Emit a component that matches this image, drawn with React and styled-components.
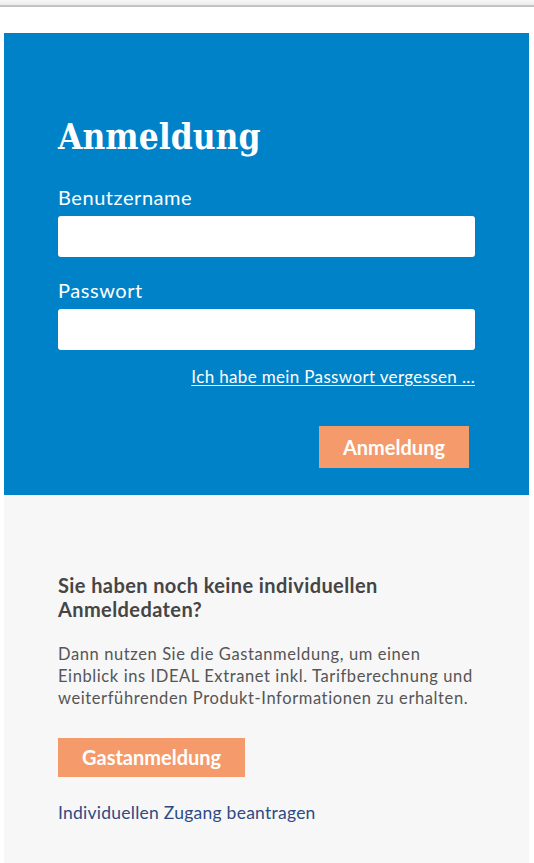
import React from "react";
import styled, { createGlobalStyle } from "styled-components";

const GlobalStyle = createGlobalStyle`
  html, body {
    margin: 0;
    padding: 0;
    background: #ffffff;
  }
  body {
    font-family: Lato, "Open Sans", sans-serif;
  }
  * {
    box-sizing: border-box;
  }
`;

const TopBar = styled.div`
  height: 7px;
  background: linear-gradient(#f7f7f7, #ececec);
  border-bottom: 2px solid #c3c3c3;
`;

const Page = styled.div`
  padding: 26px 5px 0 4px;
`;

const LoginPanel = styled.form`
  background: #0082c8;
  padding: 84px 54px 27px;
  display: flex;
  flex-direction: column;
`;

const Title = styled.h1`
  margin: 0 0 28px;
  font-family: "DejaVu Serif", "Liberation Serif", serif;
  font-stretch: condensed;
  font-weight: bold;
  font-size: 35px;
  line-height: 40px;
  color: #ffffff;
`;

const Field = styled.div`
  display: flex;
  flex-direction: column;
  gap: 7px;
  margin-bottom: ${(p) => p.$spacing}px;
`;

const Label = styled.label`
  font-size: 20px;
  letter-spacing: 0.55px;
  line-height: 24px;
  color: #ffffff;
`;

const Input = styled.input`
  height: 41px;
  border: none;
  border-radius: 3px;
  background: #ffffff;
  padding: 0 10px;
  font: inherit;
  outline: none;
`;

const ForgotLink = styled.a`
  align-self: flex-end;
  font-size: 17px;
  letter-spacing: 0.35px;
  line-height: 20px;
  color: #ffffff;
  text-decoration: underline;
  text-underline-offset: 2px;
  margin-bottom: 39px;
`;

const Button = styled.button`
  align-self: ${(p) => p.$align};
  margin-right: ${(p) => p.$offset || 0}px;
  height: ${(p) => p.$height}px;
  padding: 0 24px;
  border: none;
  border-radius: 0;
  background: #f59b6b;
  color: #ffffff;
  font-family: Lato, sans-serif;
  font-weight: bold;
  font-size: 20px;
  line-height: ${(p) => p.$height}px;
  cursor: pointer;
`;

const GuestPanel = styled.section`
  background: #f7f7f7;
  padding: 78px 54px 42px;
  display: flex;
  flex-direction: column;
  color: #4d4d4d;
`;

const GuestHeading = styled.h2`
  margin: 0 0 22px;
  font-size: 20px;
  letter-spacing: 0.4px;
  line-height: 24px;
  font-weight: bold;
  color: #454545;
`;

const GuestText = styled.p`
  margin: 0 -8px 29px 0;
  font-size: 16.5px;
  letter-spacing: 0.6px;
  line-height: 22px;
  color: #555555;
`;

const RequestLink = styled.a`
  margin-top: 25px;
  font-size: 17.5px;
  letter-spacing: 0.25px;
  line-height: 22px;
  color: #2d4a86;
  text-decoration: none;
`;

export default function App() {
  return (
    <>
      <GlobalStyle />
      <TopBar />
      <Page>
        <LoginPanel onSubmit={(e) => e.preventDefault()}>
          <Title>Anmeldung</Title>
          <Field $spacing={21}>
            <Label htmlFor="user">Benutzername</Label>
            <Input id="user" type="text" />
          </Field>
          <Field $spacing={17}>
            <Label htmlFor="pass">Passwort</Label>
            <Input id="pass" type="password" />
          </Field>
          <ForgotLink href="#">Ich habe mein Passwort vergessen ...</ForgotLink>
          <Button type="submit" $align="flex-end" $offset={6} $height={42}>
            Anmeldung
          </Button>
        </LoginPanel>
        <GuestPanel>
          <GuestHeading>
            Sie haben noch keine individuellen
            <br />
            Anmeldedaten?
          </GuestHeading>
          <GuestText>
            Dann nutzen Sie die Gastanmeldung, um einen Einblick ins IDEAL
            Extranet inkl. Tarifberechnung und weiterführenden
            Produkt-Informationen zu erhalten.
          </GuestText>
          <Button type="button" $align="flex-start" $height={39}>
            Gastanmeldung
          </Button>
          <RequestLink href="#">Individuellen Zugang beantragen</RequestLink>
        </GuestPanel>
      </Page>
    </>
  );
}
